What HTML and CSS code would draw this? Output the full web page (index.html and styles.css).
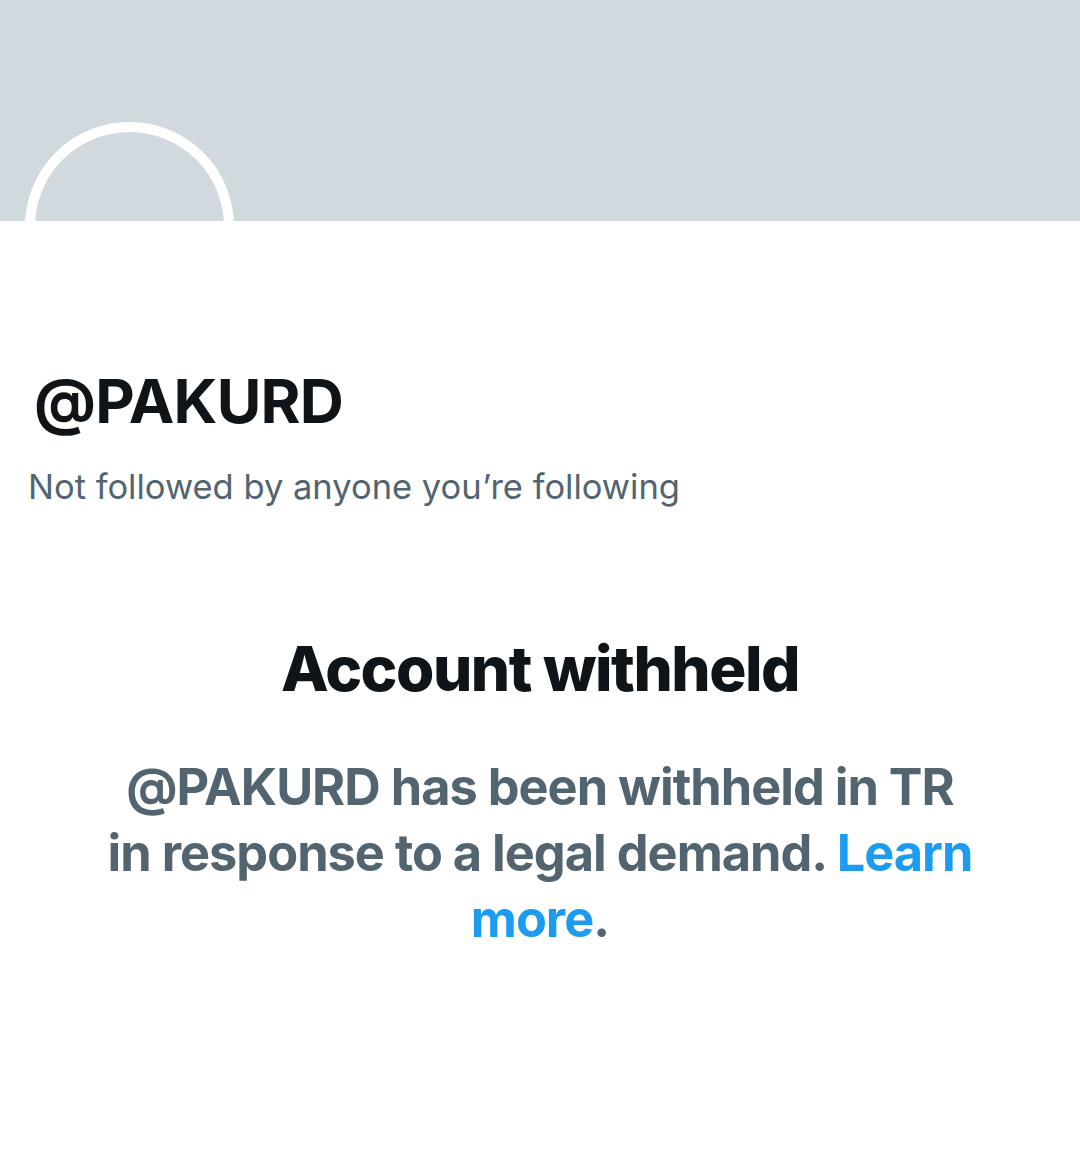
FILE: index.html
```html
<!DOCTYPE html>
<html lang="en">
<head>
    <meta charset="UTF-8">
    <meta name="viewport" content="width=device-width, initial-scale=1.0">
    <title>@PAKURD</title>
    <link rel="stylesheet" href="styles.css">
</head>
<body>
    <div class="profile-header">
        <div class="banner"></div>
        <div class="avatar"></div>
    </div>

    <div class="profile-info">
        <h1 class="handle">@PAKURD</h1>
        <p class="followers-note">Not followed by anyone you’re following</p>
    </div>

    <div class="withheld">
        <h2>Account withheld</h2>
        <p>@PAKURD has been withheld in TR in response to a legal demand. <a href="#">Learn more</a>.</p>
    </div>
</body>
</html>
```

FILE: styles.css
```css
/* General Styling */
body {
    background-color: #FFFFFF;
    color: #0F1419;
    font-family: 'Inter', 'Liberation Sans', sans-serif;
    margin: 0;
    padding: 0;
}

.profile-header {
    position: relative;
}

.banner {
    height: 221px;
    background-color: #CFD9DE;
}

.avatar {
    position: absolute;
    left: 25px;
    top: 122px;
    width: 189px;
    height: 189px;
    border: 10px solid #FFFFFF;
    border-radius: 50%;
}

.profile-info {
    padding: 140px 28px 0;
}

.handle {
    margin: 0 0 0 6px;
    font-size: 61px;
    font-weight: 700;
    line-height: 80px;
    letter-spacing: -0.8px;
}

.followers-note {
    margin: 24px 0 0;
    font-size: 34.5px;
    font-weight: 400;
    line-height: 44px;
    color: #536471;
}

.withheld {
    padding: 120px 0 0;
    text-align: center;
}

.withheld h2 {
    margin: 0;
    font-size: 62px;
    font-weight: 800;
    line-height: 80px;
    letter-spacing: -1.5px;
}

.withheld p {
    width: 874px;
    margin: 45px auto 0;
    font-size: 50.5px;
    font-weight: 700;
    line-height: 66px;
    letter-spacing: -1px;
    color: #536471;
}

.withheld a {
    color: #1D9BF0;
    text-decoration: none;
}
```
